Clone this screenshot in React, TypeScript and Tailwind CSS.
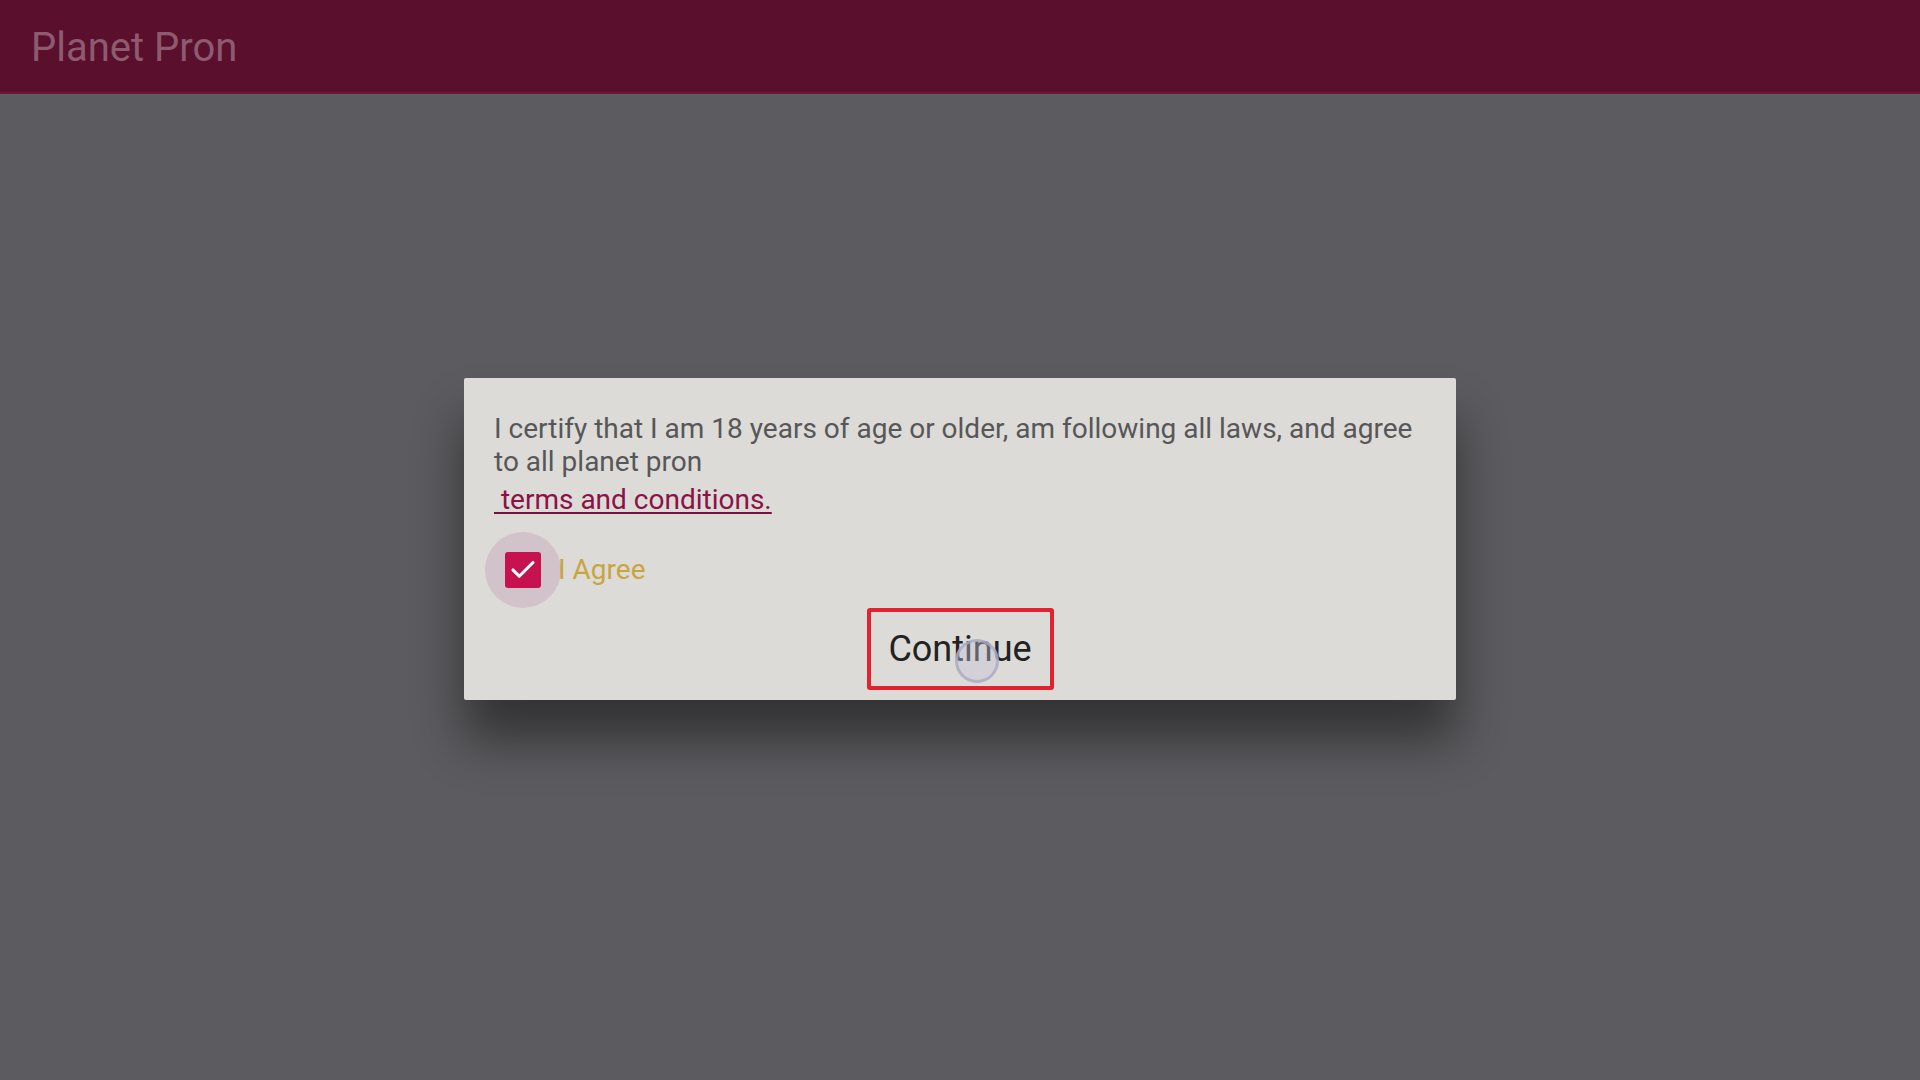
import { Check } from "lucide-react";

export default function App() {
  return (
    <div
      className="w-[1920px] h-[1080px] flex flex-col bg-[#5c5b5f] overflow-hidden"
      style={{ fontFamily: "Roboto, 'Liberation Sans', sans-serif" }}
    >
      {/* Top bar */}
      <header className="h-[94px] shrink-0 bg-[#5a0f2c] border-b-2 border-[#6b1838] pl-[31px] pt-[28px]">
        <h1 className="text-[40px] leading-none text-[#8d5b70]">Planet Pron</h1>
      </header>

      {/* Age gate dialog */}
      <main className="flex-1 flex justify-center pt-[284px]">
        <div className="w-[992px] h-[322px] bg-[#dcdbd8] rounded-[2px] shadow-[0_40px_50px_rgba(0,0,0,0.45)] flex flex-col pl-[30px] pr-[24px] pt-[34px]">
          <p className="text-[28px] leading-[33px] text-[#575757]">
            I certify that I am 18 years of age or older, am following all laws, and agree to all planet pron
          </p>
          <a className="mt-[5px] text-[28px] leading-[33px] text-[#8a1246] underline underline-offset-[3px] decoration-[#7a1040] self-start whitespace-pre">
            {" terms and conditions."}
          </a>

          <label className="mt-[16px] flex items-center ml-[-9px] self-start">
            <span className="w-[76px] h-[76px] rounded-full bg-[#d2c2c9] flex items-center justify-center">
              <span className="w-[36px] h-[36px] rounded-[3px] bg-[#c6124f] flex items-center justify-center">
                <Check className="w-[30px] h-[30px] text-white" strokeWidth={2.5} />
              </span>
            </span>
            <span className="ml-[-3px] text-[28px] text-[#c9a540]">I Agree</span>
          </label>

          <div className="flex justify-center pr-[6px]">
            <button className="relative w-[187px] h-[82px] border-[4px] border-[#e2222e] rounded-[3px] text-[36px] text-[#222222] flex items-center justify-center">
              Continue
              <span className="absolute left-[84px] top-[27px] w-[44px] h-[44px] rounded-full border-[3px] border-[#a9a9c2]/80 bg-[#c4c4d8]/40" />
            </button>
          </div>
        </div>
      </main>
    </div>
  );
}
